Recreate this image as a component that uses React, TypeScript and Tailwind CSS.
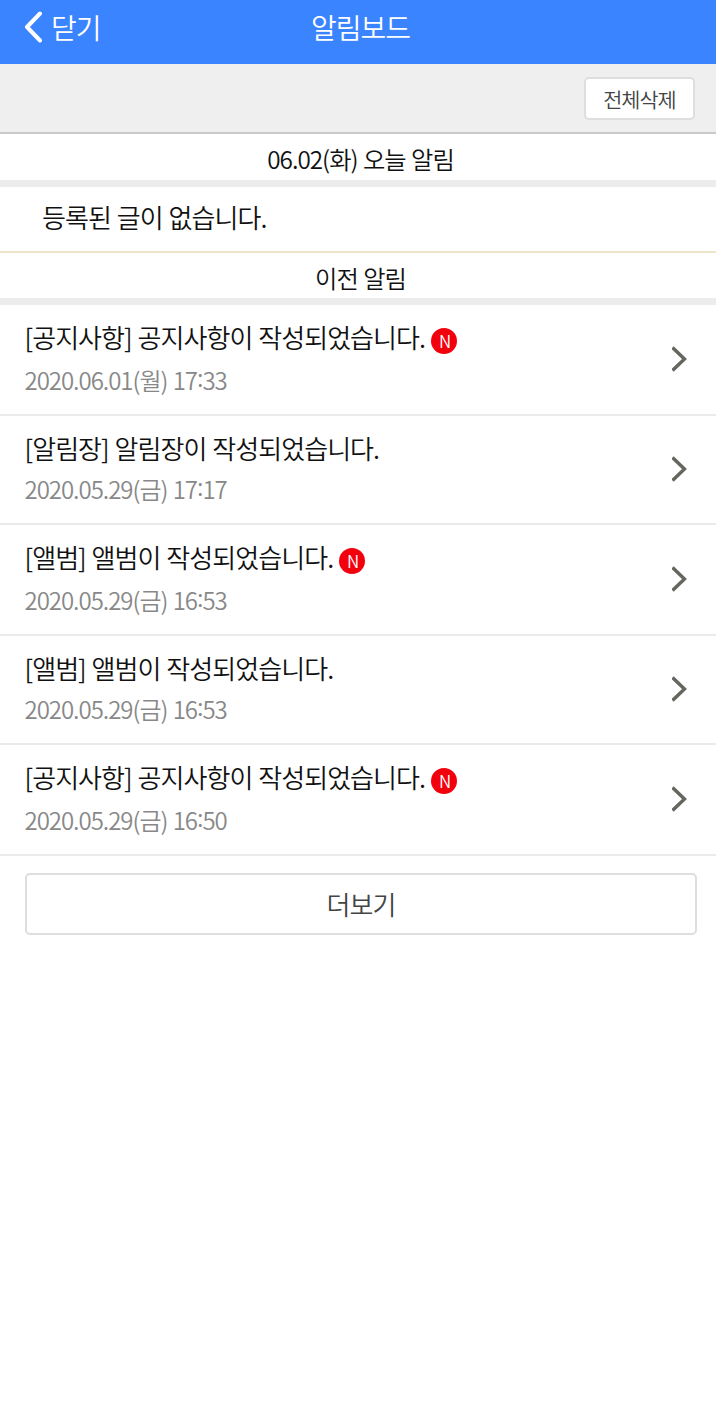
import { clsx } from "clsx";

interface Notice {
  title: string;
  date: string;
  isNew: boolean;
}

const notices: Notice[] = [
  { title: "[공지사항] 공지사항이 작성되었습니다.", date: "2020.06.01(월) 17:33", isNew: true },
  { title: "[알림장] 알림장이 작성되었습니다.", date: "2020.05.29(금) 17:17", isNew: false },
  { title: "[앨범] 앨범이 작성되었습니다.", date: "2020.05.29(금) 16:53", isNew: true },
  { title: "[앨범] 앨범이 작성되었습니다.", date: "2020.05.29(금) 16:53", isNew: false },
  { title: "[공지사항] 공지사항이 작성되었습니다.", date: "2020.05.29(금) 16:50", isNew: true },
];

function SectionTitle({ text, className }: { text: string; className: string }) {
  return (
    <h2
      className={clsx(
        "flex items-center justify-center border-b-[7px] border-[#ececec] pl-[5px] pt-[5px] text-[24.3px] font-[350] text-[#111]",
        className
      )}
    >
      {text}
    </h2>
  );
}

function NoticeRow({ notice }: { notice: Notice }) {
  const [hours, minutes] = notice.date.split(":");

  return (
    <li
      className={clsx(
        "flex items-start justify-between border-b-2 border-[#ebebeb] pl-[25px] pr-[29px]",
        notice.isNew ? "h-[111px]" : "h-[109px]"
      )}
    >
      <div className="pt-[13px]">
        <div className="flex h-[38px] items-center">
          <p className="-ml-[0.5px] text-[26px] leading-[38px] tracking-[-0.95px] text-[#111]">{notice.title}</p>
          {notice.isNew && (
            <span className="ml-1.5 mt-2 flex size-[26px] items-center justify-center rounded-full bg-[#f3000f] pb-px pl-px text-[17px] leading-none text-white">
              N
            </span>
          )}
        </div>
        <p
          className={clsx(
            "-ml-[0.5px] text-2xl leading-9 tracking-[-1.03px] text-[#888]",
            notice.isNew ? "mt-1.5" : "mt-1"
          )}
        >
          {hours}
          {/* colon sits at the middle of the digits */}
          <span className="align-[3px] leading-none">:</span>
          {minutes}
        </p>
      </div>
      <svg
        className={clsx("h-[26px] w-[15px]", notice.isNew ? "mt-[41px]" : "mt-10")}
        viewBox="0 0 15 26"
        fill="none"
      >
        <path d="M0.5 1.5L12.5 13L0.5 24.5" stroke="#66655e" strokeWidth="3.4" />
      </svg>
    </li>
  );
}

export default function App() {
  return (
    <div className="min-h-[1426px] bg-white font-['Noto_Sans_CJK_KR',sans-serif] font-[350] tracking-[-1px] [word-spacing:1px]">
      {/* Header */}
      <header className="grid h-16 grid-cols-3 bg-[#3a84ff] pt-1.5 text-[28px] leading-[42px] text-white">
        <button className="flex h-[42px] items-center gap-2 pl-6">
          <svg className="h-8 w-[19px]" viewBox="0 0 19 32" fill="none">
            <path
              d="M16 2.5L3 16L16 29.5"
              stroke="currentColor"
              strokeWidth="4"
              strokeLinecap="round"
              strokeLinejoin="round"
            />
          </svg>
          닫기
        </button>
        <h1 className="pl-[5px] text-center font-[350]">알림보드</h1>
      </header>

      {/* Toolbar */}
      <div className="flex h-[70px] justify-end border-b-2 border-[#c9c9c9] bg-[#efefef] pr-[21px] pt-[13px]">
        <button className="h-[43px] w-[111px] rounded-[5px] border-2 border-[#dedede] bg-white pt-0.5 text-[20.8px] text-[#444]">
          전체삭제
        </button>
      </div>

      {/* Today */}
      <SectionTitle text="06.02(화) 오늘 알림" className="h-[53px]" />
      <p className="h-[66px] border-b-2 border-[#ece5cc] pl-[42px] pt-[11px] text-[26px] leading-[38px] tracking-[-0.95px] text-[#111]">
        등록된 글이 없습니다.
      </p>

      {/* Previous */}
      <SectionTitle text="이전 알림" className="h-[52px]" />
      <ul>
        {notices.map((notice, i) => (
          <NoticeRow key={i} notice={notice} />
        ))}
      </ul>

      <div className="pl-[25px] pr-[19px] pt-[17px]">
        <button className="h-[62px] w-full rounded-[5px] border-2 border-[#dedede] pb-px text-[26px] text-[#444]">
          더보기
        </button>
      </div>
    </div>
  );
}
